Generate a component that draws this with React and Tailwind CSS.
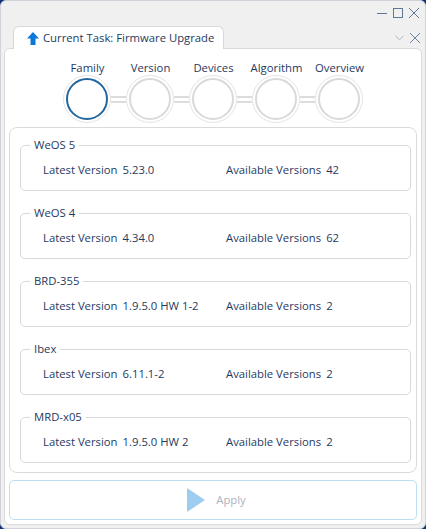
const steps = ["Family", "Version", "Devices", "Algorithm", "Overview"];

const families = [
  { name: "WeOS 5", latest: "5.23.0", available: 42 },
  { name: "WeOS 4", latest: "4.34.0", available: 62 },
  { name: "BRD-355", latest: "1.9.5.0 HW 1-2", available: 2 },
  { name: "Ibex", latest: "6.11.1-2", available: 2 },
  { name: "MRD-x05", latest: "1.9.5.0 HW 2", available: 2 },
];

function CloseIcon({ className }) {
  return (
    <svg viewBox="0 0 10 10" className={className} fill="none" stroke="currentColor" strokeWidth="1">
      <path d="M0 0L10 10M10 0L0 10" />
    </svg>
  );
}

function Stepper() {
  return (
    <div className="pl-[47px]">
      <div className="flex">
        {steps.map((step) => (
          <div key={step} className="w-[63px] shrink-0 text-center leading-[16px] whitespace-nowrap">
            {step}
          </div>
        ))}
      </div>
      <div className="mt-[-1px] ml-[7px] flex items-center">
        {steps.map((step, i) => (
          <div key={step} className="flex items-center">
            <div className="flex h-[48px] w-[48px] items-center justify-center rounded-full border border-[#e4e4e4] bg-white">
              <div
                className={
                  i === 0
                    ? "h-[42px] w-[42px] rounded-full border-2 border-[#23679f]"
                    : "h-[42px] w-[42px] rounded-full border-2 border-[#d9d9d9]"
                }
              />
            </div>
            {i < steps.length - 1 && (
              <div className="h-[7px] w-[15px] border-y-2 border-[#dcdcdc] bg-white" />
            )}
          </div>
        ))}
      </div>
    </div>
  );
}

function FamilyGroup({ family }) {
  return (
    <fieldset className="mt-[-8px] h-[54px] rounded-[5px] border border-[#d9d9d9] pl-[22px]">
      <legend className="ml-[-13px] px-[4px] leading-[16px]">{family.name}</legend>
      <div className="mt-[9px] flex leading-[16px]">
        <div className="flex w-[183px] gap-[5px]">
          <span>Latest Version</span>
          <span>{family.latest}</span>
        </div>
        <div className="flex gap-[5px]">
          <span>Available Versions</span>
          <span>{family.available}</span>
        </div>
      </div>
    </fieldset>
  );
}

export default function App() {
  return (
    <div className="h-[529px] w-[426px] bg-[#12327a]">
      <div className="h-[529px] w-[426px] overflow-hidden rounded-[6px] border border-[#d0d4da] bg-[#f0f0f0] font-['Open_Sans',sans-serif] text-[11.3px] text-[#1f3a5f]">
        <div className="flex h-[25px] items-start justify-end gap-[6px] pt-[7px] pr-[6px] text-[#5f7896]">
          <div className="mt-[5px] h-px w-[10px] bg-current" />
          <div className="h-[10px] w-[10px] border border-current" />
          <CloseIcon className="h-[10px] w-[10px]" />
        </div>

        <div className="flex h-[23px] items-stretch">
          <div className="ml-[12px] flex w-[211px] items-center gap-[4px] rounded-t-[6px] border border-b-0 border-[#d9d9d9] bg-white pl-[13px]">
            <svg viewBox="0 0 12 13" className="h-[13px] w-[12px] text-[#0a78d7]" fill="currentColor">
              <path d="M6 0L12 6.5H8.5V13H3.5V6.5H0Z" />
            </svg>
            <span className="whitespace-nowrap">Current Task: Firmware Upgrade</span>
          </div>
          <div className="ml-auto flex items-center gap-[6px] pr-[5px] text-[#6d87a5]">
            <svg viewBox="0 0 10 6" className="h-[6px] w-[9px] text-[#9fb2c6]" fill="none" stroke="currentColor">
              <path d="M.5.5L5 5L9.5.5" />
            </svg>
            <CloseIcon className="h-[10px] w-[10px]" />
          </div>
        </div>

        <div className="mx-[3px] mt-[-1px] flex h-[477px] flex-col rounded-[6px] border border-[#dadada] bg-white px-[4px] pt-[11px]">
          <Stepper />

          <div className="mt-[4px] h-[346px] rounded-[8px] border border-[#dadada] pt-[17px] pr-[5px] pl-[10px]">
            <div className="flex flex-col gap-[22px]">
              {families.map((family) => (
                <FamilyGroup key={family.name} family={family} />
              ))}
            </div>
          </div>

          <button className="mt-[7px] flex h-[40px] items-center justify-center gap-[11px] rounded-[5px] border border-[#bcdff0] bg-white pl-[7px] text-[#aab3c1]">
            <svg viewBox="0 0 18 24" className="h-[24px] w-[18px] text-[#9fcdf0]" fill="currentColor">
              <path d="M0 0L18 12L0 24Z" />
            </svg>
            <span className="mt-[1px]">Apply</span>
          </button>
        </div>
      </div>
    </div>
  );
}
